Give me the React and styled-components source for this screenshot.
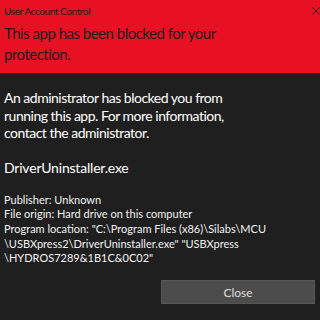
import React from "react"
import styled, { createGlobalStyle } from "styled-components"

const GlobalStyle = createGlobalStyle`
  html, body {
    margin: 0;
    padding: 0;
    background: #1f1f1f;
  }
`

const Dialog = styled.div`
  width: 320px;
  height: 320px;
  overflow: hidden;
  background: #1f1f1f;
  font-family: Lato, "Open Sans", sans-serif;
  display: flex;
  flex-direction: column;
`

const Header = styled.div`
  background: #e81123;
  height: 73px;
  padding: 0 4px;
  box-sizing: border-box;
  color: #1b1b1b;
`

const TitleBar = styled.div`
  display: flex;
  justify-content: space-between;
  align-items: center;
  height: 22px;
`

const Title = styled.span`
  font-size: 10px;
  line-height: 14px;
  letter-spacing: -0.4px;
`

const CloseIcon = styled.svg`
  width: 8px;
  height: 8px;
  margin-right: -4px;
`

const Heading = styled.div`
  font-size: 15px;
  line-height: 21px;
  letter-spacing: -0.5px;
  max-width: 250px;
  margin-top: 1px;
`

const Body = styled.div`
  padding: 16px 4px 0;
  color: #ffffff;
  display: flex;
  flex-direction: column;
`

const Message = styled.div`
  font-size: 14px;
  line-height: 17.5px;
  letter-spacing: -0.5px;
  max-width: 250px;
`

const FileName = styled.div`
  font-size: 14px;
  line-height: 18px;
  letter-spacing: -0.2px;
  margin-top: 17px;
`

const Details = styled.div`
  font-size: 11px;
  line-height: 14.7px;
  margin-top: 16px;
  color: #f2f2f2;
`

const ButtonRow = styled.div`
  display: flex;
  justify-content: flex-end;
  margin-top: 14px;
  padding-right: 1px;
`

const Button = styled.button`
  width: 154px;
  height: 24px;
  background: #4c4c4c;
  border: 1px solid #575757;
  color: #dedede;
  font-family: inherit;
  font-size: 12px;
  padding: 0;
`

export default function App() {
  return (
    <>
      <GlobalStyle />
      <Dialog>
        <Header>
          <TitleBar>
            <Title>User Account Control</Title>
            <CloseIcon viewBox="0 0 8 8">
              <path d="M0.5 0.5 L7.5 7.5 M7.5 0.5 L0.5 7.5" stroke="#2a1a1a" strokeWidth="1" fill="none" />
            </CloseIcon>
          </TitleBar>
          <Heading>This app has been blocked for your protection.</Heading>
        </Header>
        <Body>
          <Message>
            An administrator has blocked you from running this app. For more
            information, contact the administrator.
          </Message>
          <FileName>DriverUninstaller.exe</FileName>
          <Details>
            <div>Publisher: Unknown</div>
            <div>File origin: Hard drive on this computer</div>
            <div>
              Program location: "C:\Program Files (x86)\Silabs\MCU
              <br />
              \USBXpress2\DriverUninstaller.exe" "USBXpress
              <br />
              \HYDROS7289&amp;1B1C&amp;0C02"
            </div>
          </Details>
          <ButtonRow>
            <Button>Close</Button>
          </ButtonRow>
        </Body>
      </Dialog>
    </>
  )
}
